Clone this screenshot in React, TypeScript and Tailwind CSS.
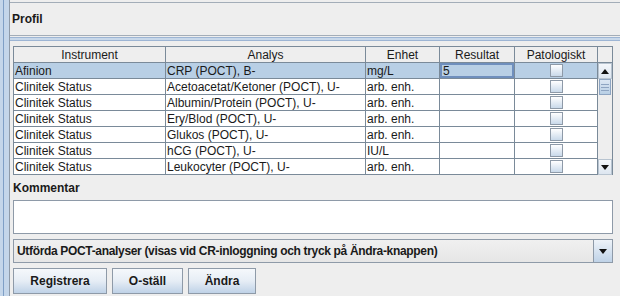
import React from "react";

const rows: [string, string, string, string][] = [
  ["Afinion", "CRP (POCT), B-", "mg/L", "5"],
  ["Clinitek Status", "Acetoacetat/Ketoner (POCT), U-", "arb. enh.", ""],
  ["Clinitek Status", "Albumin/Protein (POCT), U-", "arb. enh.", ""],
  ["Clinitek Status", "Ery/Blod (POCT), U-", "arb. enh.", ""],
  ["Clinitek Status", "Glukos (POCT), U-", "arb. enh.", ""],
  ["Clinitek Status", "hCG (POCT), U-", "IU/L", ""],
  ["Clinitek Status", "Leukocyter (POCT), U-", "arb. enh.", ""],
];

function Check() {
  return (
    <div className="w-[13px] h-[13px] border border-[#8e9aa8] bg-gradient-to-b from-white to-[#c9d9ea]" />
  );
}

function UpTri() {
  return (
    <svg width="8" height="5" viewBox="0 0 8 5">
      <polygon points="0,5 8,5 4,0" fill="#111" />
    </svg>
  );
}
function DownTri() {
  return (
    <svg width="8" height="5" viewBox="0 0 8 5">
      <polygon points="0,0 8,0 4,5" fill="#111" />
    </svg>
  );
}

export default function App() {
  return (
    <div className="w-[620px] h-[296px] bg-[#eeeeee] flex overflow-hidden font-['Liberation_Sans',Arial,sans-serif] text-[12px] text-[#1a1a1a] leading-none">
      {/* left frame border */}
      <div className="flex shrink-0 h-full">
        <div className="w-[3px] bg-[#c4d6ea]" />
        <div className="w-px bg-[#7f9fc6]" />
        <div className="w-[5px] bg-[#c4d6ea]" />
        <div className="w-px bg-[#8e9aa8]" />
      </div>
      <div className="flex-1 flex flex-col">
        <div className="h-[2px]" />
        {/* Profil panel */}
        <div className="h-[34px] border-t border-b border-[#a3adb8] flex items-center pl-[2px] font-bold">
          Profil
        </div>
        {/* blue band */}
        <div className="h-[4px] mt-[1px] border-y border-[#9db5d4] bg-[#c8d8ea]" />
        <div className="flex-1 flex flex-col pl-[3px]">
          {/* table */}
          <div className="mt-[5px] w-[600px] border-t border-l border-[#7a8a99] flex">
            <div className="flex flex-col">
              <div className="flex h-[16px]">
                {[
                  ["Instrument", "w-[152px]"],
                  ["Analys", "w-[200px]"],
                  ["Enhet", "w-[74px]"],
                  ["Resultat", "w-[75px]"],
                  ["Patologiskt", "w-[83px]"],
                ].map(([t, w]) => (
                  <div
                    key={t}
                    className={`${w} h-[16px] border-r border-b border-[#7a8a99] bg-[#eeeeee] flex items-center justify-center pt-px`}
                  >
                    {t}
                  </div>
                ))}
              </div>
              {rows.map((r, i) => {
                const sel = i === 0;
                const bg = sel ? "bg-[#b8cfe5]" : "bg-white";
                return (
                  <div key={i} className={`flex h-[16px] ${bg}`}>
                    <div className="w-[152px] h-[16px] border-r border-b border-[#7a8a99] flex items-center pl-[1px]">
                      {r[0]}
                    </div>
                    <div className="w-[200px] h-[16px] border-r border-b border-[#7a8a99] flex items-center pl-[1px]">
                      {r[1]}
                    </div>
                    <div className="w-[74px] h-[16px] border-r border-b border-[#7a8a99] flex items-center pl-[1px]">
                      {r[2]}
                    </div>
                    <div className="w-[75px] h-[16px] border-r border-b border-[#7a8a99] flex">
                      {sel ? (
                        <div className="flex-1 border-2 border-[#6f8fbd] bg-[#b8cfe5] flex items-center pl-[1px]">
                          {r[3]}
                        </div>
                      ) : null}
                    </div>
                    <div className="w-[83px] h-[16px] border-r border-b border-[#7a8a99] flex items-center justify-center">
                      <Check />
                    </div>
                  </div>
                );
              })}
            </div>
            {/* scrollbar column */}
            <div className="w-[16px] flex flex-col border-r border-[#7a8a99]">
              <div className="h-[16px] border-b border-[#7a8a99] bg-[#eeeeee]" />
              <div className="h-[16px] bg-gradient-to-b from-[#f4f7fb] to-[#dde6f0] border border-[#b8c4d0] flex items-center justify-center">
                <UpTri />
              </div>
              <div className="h-[16px] mx-[1px] bg-gradient-to-b from-[#dce7f3] to-[#b8cfe5] border border-[#8ea5c2] flex flex-col items-center justify-center gap-[2px]">
                <div className="w-[8px] h-px bg-[#8ea5c2]" />
                <div className="w-[8px] h-px bg-[#8ea5c2]" />
                <div className="w-[8px] h-px bg-[#8ea5c2]" />
              </div>
              <div className="flex-1 bg-[#eeeeee]" />
              <div className="h-[16px] bg-gradient-to-b from-[#f4f7fb] to-[#dde6f0] border border-[#b8c4d0] flex items-center justify-center">
                <DownTri />
              </div>
            </div>
          </div>
          {/* Kommentar */}
          <div className="mt-[4px] h-[18px] flex items-center font-bold">Kommentar</div>
          <div className="mt-[3px] w-[600px] h-[34px] bg-white border border-[#8e9aa8]" />
          {/* combo */}
          <div className="mt-[5px] w-[600px] h-[24px] border border-[#8e9aa8] flex bg-gradient-to-b from-[#f0f0f0] to-[#e6e6e6]">
            <div className="flex-1 flex items-center pl-[3px] font-bold tracking-[-0.33px]">
              Utförda POCT-analyser (visas vid CR-inloggning och tryck på Ändra-knappen)
            </div>
            <div className="w-[19px] border-l border-[#8e9aa8] bg-gradient-to-b from-[#eef3f9] to-[#bfd2e7] flex items-center justify-center">
              <DownTri />
            </div>
          </div>
          {/* buttons */}
          <div className="mt-[5px] flex gap-[5px]">
            {[
              ["Registrera", "w-[94px]"],
              ["O-ställ", "w-[71px]"],
              ["Ändra", "w-[68px]"],
            ].map(([t, w]) => (
              <div
                key={t}
                className={`${w} h-[26px] border border-[#8e9aa8] bg-gradient-to-b from-[#f5f8fb] via-[#e6edf5] to-[#bfd2e7] flex items-center justify-center font-bold`}
              >
                {t}
              </div>
            ))}
          </div>
        </div>
      </div>
    </div>
  );
}
